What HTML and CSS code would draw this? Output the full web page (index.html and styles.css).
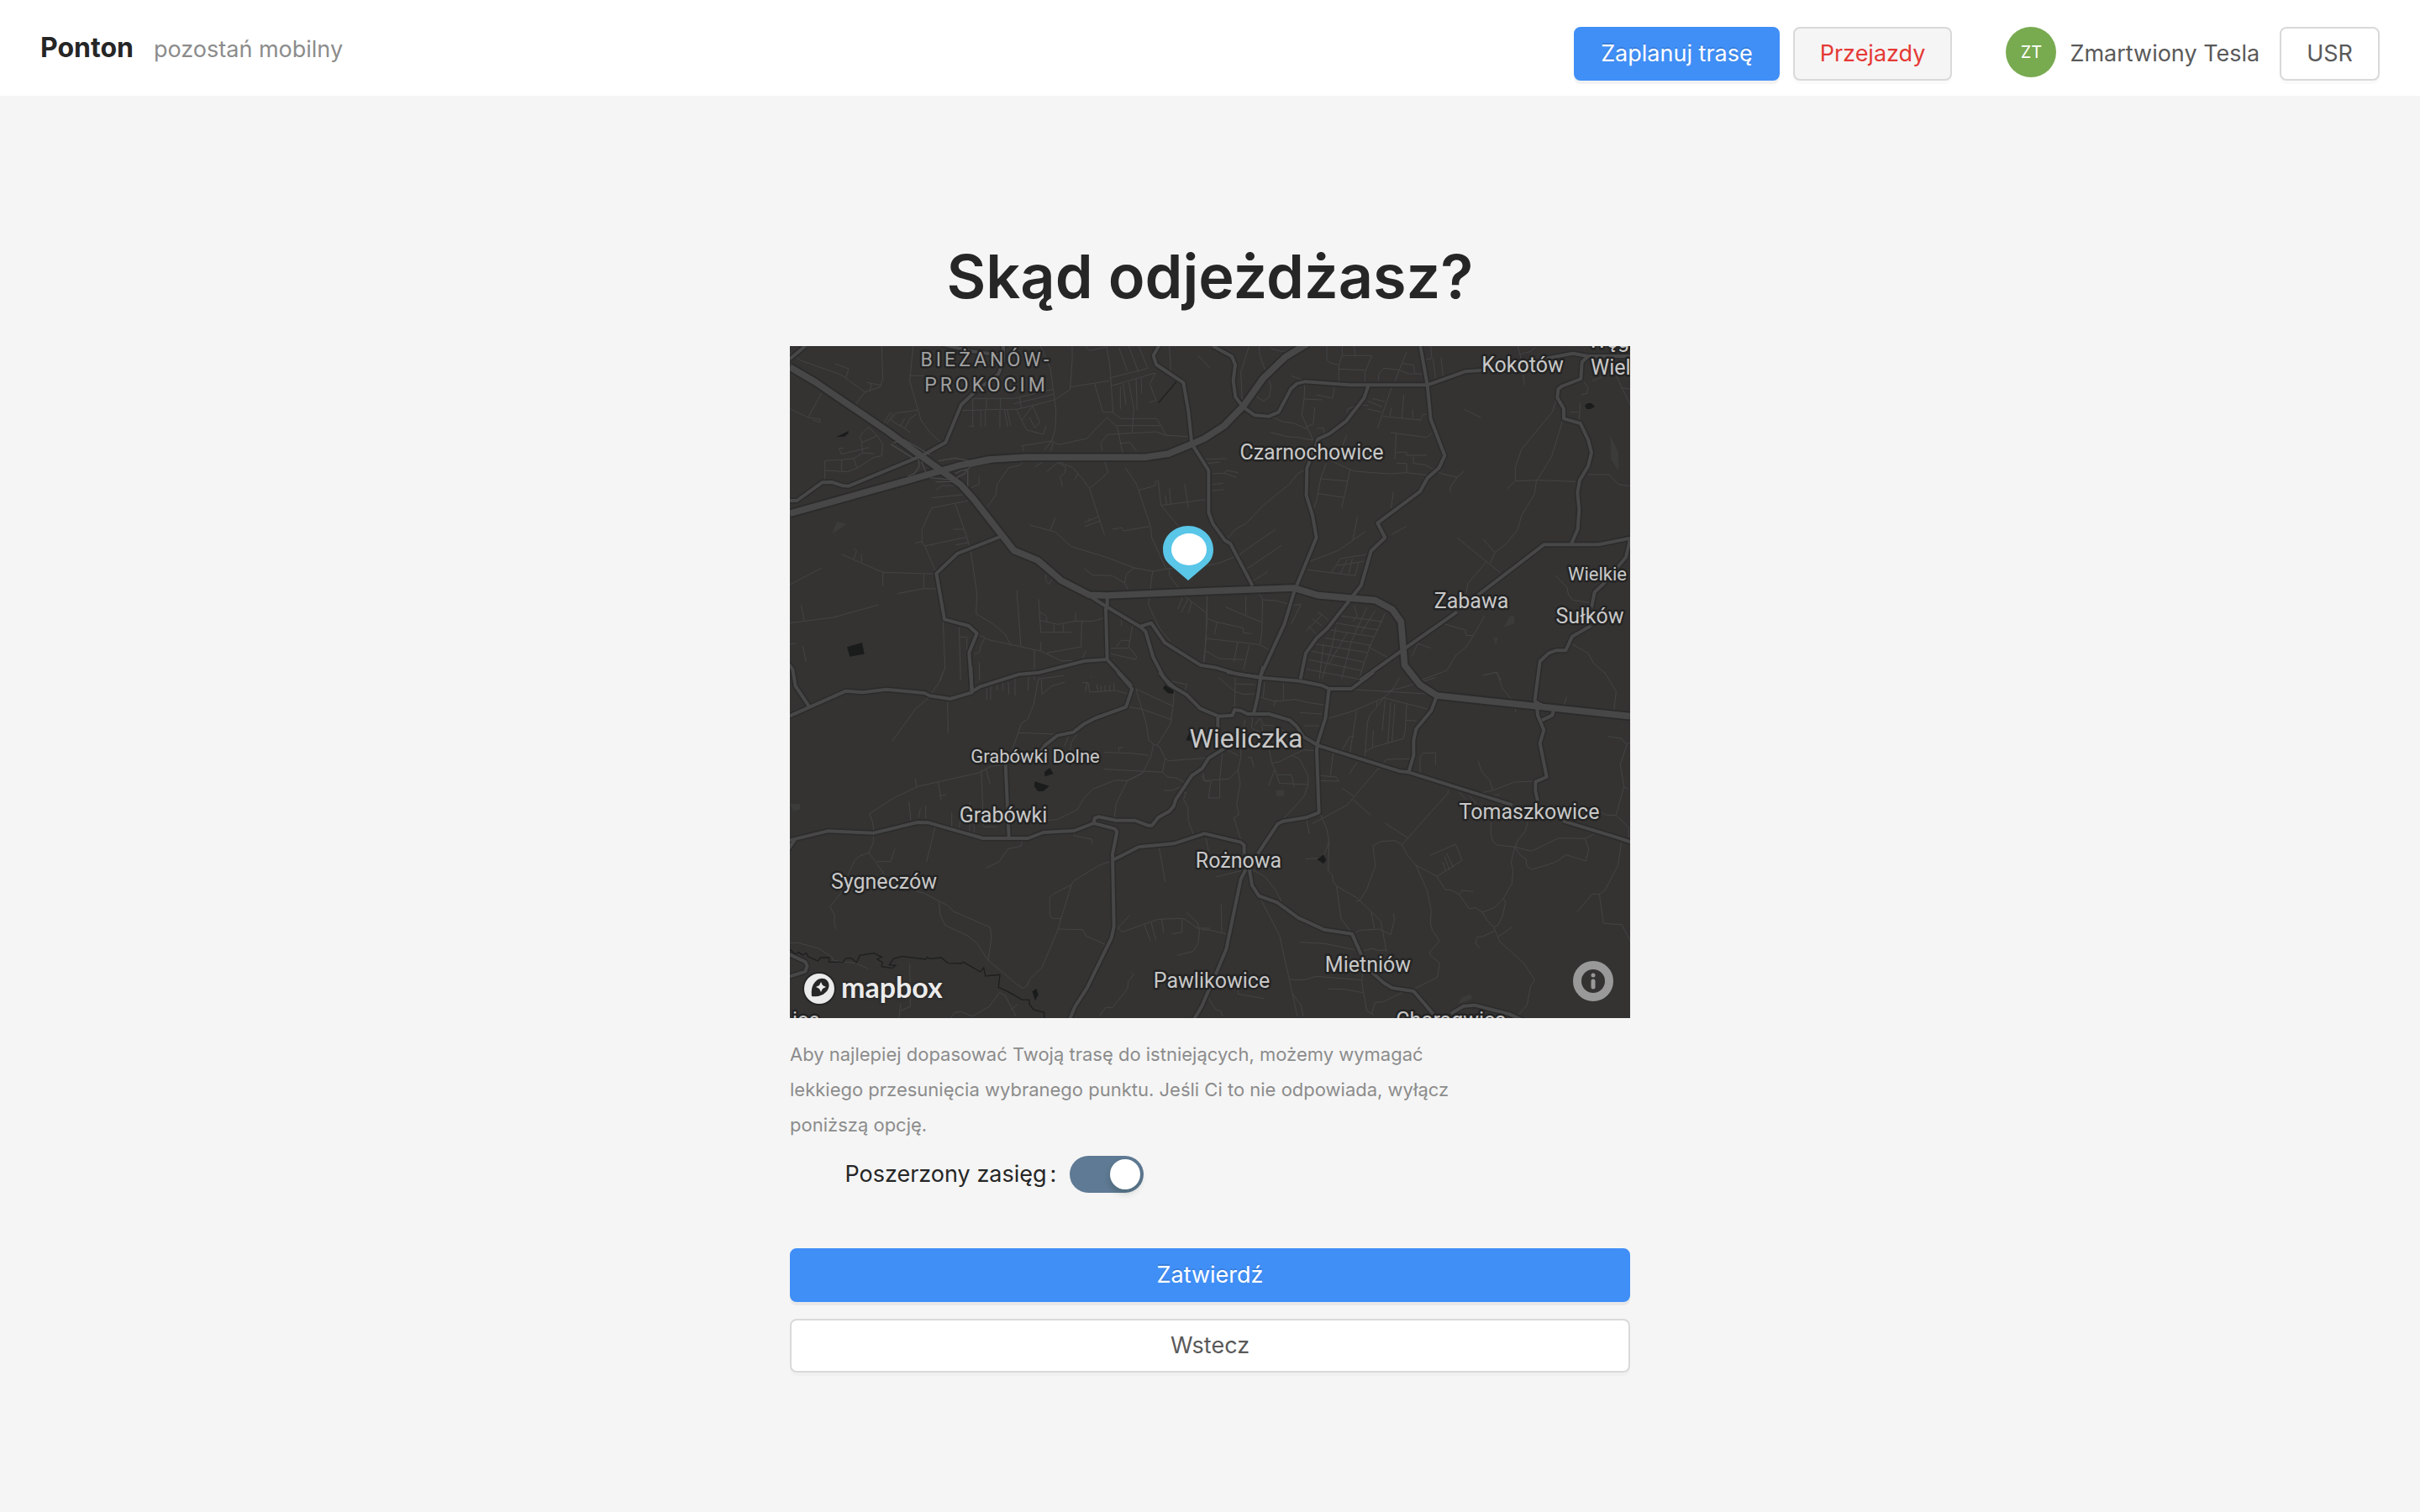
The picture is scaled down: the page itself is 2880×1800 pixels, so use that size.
FILE: index.html
```html
<!DOCTYPE html>
<html lang="pl">
<head>
  <meta charset="UTF-8" />
  <meta name="viewport" content="width=device-width, initial-scale=1.0"/>
  <title>Ponton</title>
  <link rel="stylesheet" href="styles.css">
</head>
<body>

  <header class="page-header">
    <div class="brand">
      <span class="brand-title">Ponton</span>
      <span class="brand-subtitle">pozostań mobilny</span>
    </div>
    <nav class="header-actions">
      <button type="button" class="btn btn-primary">Zaplanuj trasę</button>
      <button type="button" class="btn btn-danger">Przejazdy</button>
      <div class="user">
        <span class="avatar">ZT</span>
        <span class="user-name">Zmartwiony Tesla</span>
      </div>
      <button type="button" class="btn">USR</button>
    </nav>
  </header>

  <main class="content">
    <h1>Skąd odjeżdżasz?</h1>

    <div class="map">
      <svg class="map-canvas" viewBox="0 0 1000 800" role="img" aria-label="Mapa okolic Wieliczki">
        <svg width="1000" height="800" viewBox="0 0 3000 2400">
          <defs>
            <!-- Drogi lokalne -->
            <g id="roads">
              <g transform="translate(-30 -36)">
                <path d="M30 82L85 36M0 588H55L145 523L180 522L220 535L240 536L500 428L586 380L642 245L690 200L775 135L792 90V30"/>
                <path d="M575 30L680 55L780 68M1350 30L1328 70L1338 102L1435 167L1453 270L1465 385L1525 480V630L1540 670L1583 730L1603 742L1682 892"/>
                <path d="M785 715L628 777L553 848L582 1012L668 1035L698 1062L670 1130L680 1270L710 1252L850 1208L920 1202L1085 1160L1162 1155L1250 1250"/>
                <path d="M1095 925L1150 960L1280 1038L1320 1025L1368 1095L1495 1175L1550 1184L1630 1208L1705 1218M1163 930V960L1158 975L1163 1155M1280 1038L1300 1055L1327 1147L1365 1220L1402 1255"/>
                <path d="M0 1140L40 1190L50 1250L100 1325"/>
              </g>
              <g transform="translate(1470 -36)">
                <path d="M40 36L108 73L120 103L113 160L121 218L148 254L190 283L240 287L275 272L318 190L340 170L368 163L530 175H806L940 127L1005 122M595 178L580 222L515 305L455 350L415 368L405 400L376 472L374 570L396 640L410 720L340 890"/>
                <path d="M780 30L806 175L818 297L868 427L848 470L806 508L780 555L628 668L655 720L605 768L570 890L450 1043L410 1080L372 1133L353 1225"/>
                <path d="M333 905L295 1030L205 1225M565 1230L727 1115L912 985M980 930L1222 745H1418L1540 720"/>
                <path d="M1230 80L1325 62L1380 72H1540M1380 72L1358 93L1354 153L1285 180L1273 190L1270 220L1293 260V295L1352 312L1380 370L1392 417L1380 465L1350 515L1342 560L1348 620L1343 690L1320 742M1530 725L1515 790L1440 880L1403 915L1392 970M1390 1035L1323 1073L1300 1123H1265L1240 1132L1208 1162L1190 1300L1197 1320L1200 1355L1222 1407L1208 1455L1232 1575L1192 1592V1625L1200 1660"/>
              </g>
              <g transform="translate(-30 1164)">
                <path d="M0 170L230 68L290 73L375 62L510 75L530 85L602 96L680 73L676 -20M1200 0L1252 60L1230 125L1120 165L1078 187L1042 215L985 227L940 262L920 290M800 330L812 592"/>
                <path d="M1350 0L1385 45L1445 80L1495 130L1560 158L1610 155L1618 135L1640 138L1665 150H1740L1815 172L1840 195L1865 232L1915 262"/>
                <path d="M0 608L165 568L330 575L485 537L525 538L720 594H880L935 573L1045 567L1115 540L1190 560L1198 570L1182 650L1187 910L1178 950L1090 1130L1048 1195L1025 1250M1115 540L1118 522L1132 517L1195 530H1262L1308 548H1323L1345 520L1385 497L1400 480L1408 455L1465 370L1502 345L1525 308L1570 280L1620 250"/>
                <path d="M48 598L20 640M20 1005L85 1035L92 1050L85 1070L20 1090M1187 670L1275 625L1400 613L1510 577L1640 608L1652 618V650"/>
              </g>
              <g transform="translate(1470 1164)">
                <path d="M90 0L210 20L350 32L430 48L455 60H535L615 0M220 -20L212 10L200 90L186 148M58 160V210M455 60L442 165L415 250L411 280L419 502L373 520L290 533L272 542L200 650M415 262L710 355L740 358L1110 475M740 355L757 298V245L766 203L820 138L840 85M1290 532L1480 590L1540 610M1258 130L1252 155L1215 172M1190 105L1240 132"/>
                <path d="M158 705L140 740L88 990L50 1080L0 1195L-30 1245M170 700L180 762L205 800L270 823L345 878L437 920L537 935L570 1010M605 1070L650 1110L680 1128L757 1140L830 1225M890 1220L935 1193L975 1190L1100 1222L1160 1250"/>
              </g>
            </g>

            <!-- Drogi krajowe i autostrada -->
            <g id="highways">
              <path d="M0 75L90 128L350 305L475 397L610 495L655 545L800 730L885 765L970 838L1070 889L1130 891L1500 875L1800 864L1885 890L2090 908L2150 940L2182 985L2195 1140L2250 1210L2310 1248L2700 1290L3000 1322"/>
              <path d="M0 598L420 480L610 425L710 405L840 397H1270L1350 385L1435 350L1480 330L1550 285L1620 213L1690 115L1770 38L1850 -10"/>
            </g>
          </defs>

          <!-- Ulice -->
          <g class="streets">
            <g transform="translate(-30 -36)">
              <path d="M30 60L70 88L212 138L298 200L352 182L362 155L358 36M192 99L240 117L230 150M298 200L265 243M305 166L355 176M322 170L315 198M30 260L95 291L140 298L136 308L112 300M95 291L143 205M155 512V445L215 442L258 437L290 418L287 380L280 362L290 345L312 325L345 360L362 388L358 428L330 433L270 472L235 485L155 480M215 442V482M258 437L270 472M290 418L332 420M287 380L340 358M205 402L215 422L312 398M205 402L222 400"/>
              <path d="M470 36L458 160L498 300L530 345L570 380M458 142H515M366 310L390 272M376 314L400 275M390 300L410 275L485 265M390 300L425 322L440 295M425 322L440 330L462 292L482 280M440 330L460 345"/>
              <path d="M683 223H830L970 190M683 223V320M645 266L775 262H840L975 228M732 223V262M782 223V262M850 220L856 256M712 266V325M728 266V322M780 266V328M796 264L808 325M806 264L818 320M670 322H688M840 265L875 335L935 352L945 320M858 300L897 250L922 308L905 328L885 290M680 223L640 245M830 242L972 208"/>
              <path d="M1038 36V90L1030 192L975 228L980 262L978 330L965 375L990 388L1090 366L1163 290L1200 328L1218 420M925 36L960 115L975 228M1085 36L1100 52L1160 40M1160 36L1172 100L1184 273L1212 295H1340L1375 355L1465 360M1172 150L1308 115M1178 178L1335 132M1205 42L1235 125M1240 36L1275 130M1275 36L1308 115M1030 182L1172 160M1118 170L1148 272H1184M1210 180V260M1220 170L1230 245M1240 165L1258 260L1252 345M1266 150L1270 265M1285 150V205M1335 132L1315 172L1338 230L1312 238M1195 320H1355M1140 382L1145 410M1140 382L1163 352L1338 342L1375 355M1212 383L1245 380L1268 412M965 375L860 392L865 410M965 375L940 405M970 380L962 410M1385 36L1390 125"/>
              <path d="M1487 70L1530 115M990 450L1040 470L1075 510L1100 545L1153 710M1100 545L1166 488L1155 450M735 612L765 568L770 530L812 470L850 462L862 450M905 468L932 450M947 485L985 452L1015 468L1012 488L995 503L1004 538M1045 515L1060 490M1083 665L1132 645M1083 680L1138 660M1095 650L1105 660M1228 470L1268 530L1318 680L1322 720L1375 835M1278 550L1332 535L1338 515M1345 515L1355 605L1420 682M1355 605L1515 584M1370 568L1375 602M1385 545L1390 600M1440 528L1452 615M1180 690L1215 685L1222 696L1315 680M887 675L978 700L1035 752L1165 792L1260 828L1325 840L1400 828M978 648L960 692"/>
              <path d="M535 578L668 565M550 552L572 534H640M536 614L668 588M536 614L502 690V738L512 750L553 848M620 598L662 718L676 770L698 920L695 992L755 1028L798 1065L820 1105M512 750L662 718M613 690H650M622 746L668 738M478 740L502 734M665 538V470M678 542L706 528V502M215 780L362 844L553 850M258 758L268 768L258 796M286 778V808M362 844V893M508 850V900M415 920L508 902L553 903M30 888L145 828M30 1025L185 1005L347 960M70 960L82 1018M76 1108L88 1163M30 1100L52 1098"/>
              <path d="M1080 830L1110 853L1180 856L1225 882L1240 910M1260 828L1232 850L1225 882M1325 840L1310 960L1350 1045L1388 1090M1385 832V856L1418 900M945 850L943 872L956 887L966 868M840 908L855 1110M918 940L926 1058H1035M922 985L945 1000L948 1020M920 1015L988 1030L1050 1018L1110 1019L1148 1008M973 1030V1055M1006 1030V1055M1050 988V1018M1072 1020L1070 1110L948 1132M700 1065L740 1085L925 1125L1000 1160H1040M925 1092V1125M903 1120V1230M577 1020L584 1185L565 1230M634 1040L640 1230M634 1075H662V1130M725 1080L710 1110V1125L690 1138M706 1165L708 1230M1440 930L1519 990M1432 935L1415 975M1452 940L1427 988M1465 948L1453 990M1253 1035L1240 1110L1268 1145L1265 1155L1175 1135M1175 1115H1240M1195 1110L1213 1087H1245M1214 1015V1035M1088 1125L1075 1150M1519 920V1020L1510 1160"/>
            </g>
            <g transform="translate(1470 -36)">
              <path d="M168 40L140 130L145 235M205 36L208 70L248 180L242 218L222 232L200 220L192 200M248 45L290 56L310 50M320 142L368 160M447 36V85L460 97L490 103M502 36V70L490 103V162M502 70H608L583 130V165M545 36L548 70M490 118L583 122M732 57L718 90L690 162M630 160L634 135L650 115L700 120L740 135H788M715 98L757 104L760 132M818 36L822 80L802 84M826 80L835 150M855 75L862 145M1130 36L1138 70L1153 175M1138 65L1175 55L1190 42"/>
              <path d="M368 175L366 225L358 282L398 372M366 225L430 228M410 210L468 222L474 182M404 255L398 315L372 325M245 288L295 308L325 310L378 332M245 344L308 360L345 362L398 372M412 330L436 328V350M520 275V262L560 245L595 248M610 223L655 235M592 232L645 253M592 260L642 272M678 185L628 330M648 287L782 300L790 280H803M672 285L678 256M722 210L715 292M754 290V262M675 345L803 362L822 347M695 348L690 440M692 415H732V426H805M756 430V455L798 460L858 492L912 505L938 482M697 455H732V488M912 505L888 540V558M460 445L545 483L670 492L730 488L805 497M445 455L425 510L410 590L400 615M425 510L522 518M530 478L500 615M415 563L505 576M365 480L342 492L315 528L220 605L158 670L120 690L95 722"/>
              <path d="M15 440L90 438M20 455L65 450M38 492L80 490L90 480L130 488M80 490L125 505M38 530L78 526M38 553L78 548M135 780L264 690M160 833L285 748M182 875L236 842M20 820L65 810L140 780M380 835L548 856L560 810M387 805L490 765L585 698M556 645L540 728M465 842L496 795L590 780M482 820L578 805M520 798L495 850M538 795L525 850M685 558L676 615M678 710L730 680M500 400L518 355M1265 230L1253 270L1142 405L1120 470V518L1092 545M1120 518L1205 515L1335 520M1288 305L1250 430L1195 520L1188 565L1143 640L1128 692L1085 745L1047 773L1030 812M1005 725L1047 773M912 720L1068 847M1018 805L950 885L945 920M938 262L998 292M1380 495H1455L1488 530L1530 536M1352 240L1348 298M1315 272H1345M1365 165L1380 185L1375 205L1355 210M1480 140L1500 185L1530 245M1500 185L1530 190M1395 160L1460 135"/>
              <path d="M20 925L15 1095L5 1180M158 930V995M85 968L213 1022M205 920L218 940L215 1060L208 1102L242 1122M218 942L265 945L328 962L355 958L320 1028M20 1010L55 1022L148 1042L150 1060L178 1063M55 1022L46 1065M15 1080L208 1102M128 1095L115 1165M170 1105L150 1190M15 1125L62 1152L152 1156M412 985L430 995L372 1055M430 995L452 1015M395 1010L430 1035M380 1035L410 1065M655 990L600 1110L560 1230M545 965L555 1000L540 1020M500 1000L645 1020M480 1025L630 1050M460 1050L618 1075M440 1078L608 1105M405 1100L590 1130M390 1125L580 1165M380 1155L570 1195M375 1190L560 1225M590 970L535 1090L500 1225M620 980L570 1060M480 1040L465 1110L430 1225M520 1060L455 1170M435 1100L420 1225M595 1110L668 1150M750 1145L772 1098L818 1115M865 1028L942 1050L945 1070H970L1010 1000M970 1070L945 1110L908 1140L875 1195L780 1230M1262 855L1305 898L1310 925L1325 943L1390 953M1323 1100L1380 1133L1400 1170L1440 1203L1480 1270L1472 1338M1005 1212L1052 1202L1070 1230"/>
            </g>
            <g transform="translate(-30 1164)">
              <path d="M578 0L565 35L522 95L480 130L395 248M593 100L595 218M733 55V100M747 50V100M770 45V65M790 38V68M810 35L812 80M834 25V85M883 10L880 65M918 20L900 118L878 170L857 182L820 290M915 25L1008 13M928 28L930 80L965 50L1012 36M845 217L975 222M1055 222L1036 250L1030 280M1025 230L1010 265M1092 36L1085 70M1075 38H1095L1100 72L1195 66L1250 82M1125 45L1130 68M1140 48L1142 68M1155 48V68M1172 45V68M1187 40V68M1105 15V20M1240 125L1285 132L1392 170M1265 60L1398 122M1265 60L1302 182L1312 245L1328 257L1350 268L1370 308L1382 317L1520 307M1402 70L1398 122L1390 182L1342 262M1328 257L1320 300L1290 360L1235 388L1195 470L1188 525M1150 287L1250 290L1312 298M1204 285V270H1220M1150 347L1360 358L1370 308M1360 358L1380 375L1408 378L1440 395M1290 360L1238 388L1190 387L1112 418L1082 448L1055 492L985 527L945 530"/>
              <path d="M800 330L745 338L705 360L490 408L410 445L315 505L325 535L330 570M478 380L482 410M560 393L570 458M565 442L588 438M713 350L722 550M455 462L462 530M496 487L490 520M515 478V522M608 502V555M640 520L635 555M672 465V570M688 490V575M722 553H770M745 400L730 345M548 555L518 678M328 585V610L312 645L280 657L262 672L235 730M312 645L345 690L370 728M340 677H390L405 632M220 780L173 838L190 870L188 895L195 917M860 600L855 622L808 632L778 677L730 700M1042 570L1045 585L1108 597V615M480 782L515 793L595 835L615 855L745 912L750 945L738 1030M562 820L568 870L585 905L665 942L697 968L738 1030L840 1115L862 1130L876 1122L888 1095L930 1055L985 925L1035 760L1045 745L1135 690L1180 675M1035 760L970 793L958 805V868L965 880H998M988 918L1075 920L1088 943L1155 973"/>
              <path d="M30 967H60L135 988L180 1018L185 1030L265 1040L310 1060M458 1040L460 1195L425 1210M425 1185L420 1240M605 1235L618 1217L640 1212L680 1230L742 1195L778 1145L798 1155L838 1230M820 1205L842 1188M1200 915L1218 928L1345 883L1430 880L1440 883L1485 915H1530M1200 915L1242 870M1430 880V930L1395 935M1357 882L1365 932M1295 900L1317 960M1320 895L1337 958M1445 857L1485 895L1493 920L1487 970L1470 998L1412 1012M1348 625L1370 748M1505 360L1510 390H1530M1365 423H1395L1430 408M1435 430L1445 430L1435 455L1452 485V530L1470 578M1250 1075L1258 1080L1238 1105L1236 1130L1182 1198H1157L1135 1230M1515 590L1525 640M1385 30L1448 45L1440 65"/>
            </g>
            <g transform="translate(1470 1164)">
              <path d="M60 20L120 70L150 80L190 78M120 20L118 130M120 42L190 45M225 35L220 90M292 40V100M210 90L260 105L335 98L375 108L440 118M265 100L256 122M350 145L430 150M365 192H420M535 62L835 80M455 165L545 138L650 92L805 132M708 18L680 65L650 92M835 20L720 55L650 72M650 92L630 120M627 105L625 125L600 155L592 180L583 300M655 100L645 210M675 108L665 255M690 112L680 250M732 115L727 210L720 238L615 268L583 285M727 172L768 175M553 140L530 288M613 208L610 268M545 230H530L495 290M630 350L660 312L745 310M557 320L528 363M470 290L460 368M182 160L178 200L250 235M155 170L150 200M190 190L208 165L222 190L255 192L315 220M215 190L220 225L235 232M240 270L250 325L262 350L278 397L380 402M250 325L275 322L322 298L365 278L415 282M322 298L350 310L380 370V405L365 445L295 522M140 270V305L130 350L138 400L125 470L133 510L115 520L140 600M130 350L98 382L10 388L0 370M75 280L65 385V450H25L30 410L35 390M78 270L132 300M165 305H178L187 340M240 405L260 350M270 367H320L332 410M423 370L480 375L490 390L425 388M395 542L520 475L545 445L630 345M545 445L502 415M540 455L604 512M655 540L740 595M715 617L880 432V420M780 365V305L790 290L835 288V332"/>
              <path d="M425 510L447 560L455 605L452 708L467 725L470 750L482 765L498 880L530 925M455 600L445 635L430 660M370 668L415 665M375 530L385 577M482 765L552 805L605 855L640 890L660 1000M552 820L565 815L588 780L620 695L612 620L640 605L690 602L715 617L738 658L765 690L840 730L870 778H890L920 795L955 845L978 842L1002 858L1022 890L1042 910L1065 963L1150 1040L1190 1100L1175 1120L1162 1190L1130 1225M765 690L805 780L820 850L817 900L825 925L850 960L815 1000L817 1012L850 1040L842 1090L762 1130M920 795L930 780L970 784M840 730L930 673L907 615L815 655M860 677L872 712M875 647L898 698M868 660L885 708M1002 858L1045 842L1078 808L1085 825L1075 870L1058 905L1042 910M1045 925L1003 945H985L978 968L992 985M1110 910L1060 945M1078 808L1108 755L1112 710L1105 680L1118 625L1130 600L1155 570L1165 535M1118 625L1055 618L1040 605L1032 578L1034 535M1118 625L1178 640L1275 593L1370 595L1400 580M1118 625L1138 655L1158 668L1162 695L1180 705L1262 680L1302 653L1372 675L1382 635L1370 595M1498 610L1487 690L1440 780L1420 793H1395L1340 857M1420 793L1435 898L1500 902L1520 940L1530 960"/>
              <path d="M988 318L1000 355L1030 390L1040 422L1000 432M1040 422L1118 393L1185 390M920 430L945 455M1045 440L1065 438M955 440L980 470M1450 230L1500 238L1518 260L1495 330L1508 410L1480 510M1518 260L1530 250M1508 410L1525 420M1420 495L1440 510L1480 512L1525 555V590M1003 12L1055 0L1072 55L1100 90L1120 105M1303 88L1293 125M1120 130V145M50 732L140 710M70 830L72 930M0 920L30 922L88 936M180 705L225 730L265 780L285 820M205 800L278 940L342 1230M350 965L440 970L545 992M315 1098L365 1100L410 1087L570 1100M450 1132L510 1133L575 1145M580 1020L572 1110L590 1210L615 1225M580 995L612 987L630 995L660 993M550 930L565 922L635 918L675 938L688 885L685 862M605 855L617 915M718 1145L695 1155L650 1178L620 1180L607 1220M130 1130V1150L223 1166M25 1165L50 1205L70 1212L75 1230M325 1150L355 1190L363 1230"/>
            </g>
          </g>

          <!-- Woda i rzeka -->
          <path class="river" d="M0 2155L20 2172L32 2165L45 2175L58 2168L65 2180L100 2196L110 2184H140V2200H190L200 2186H220L238 2202L250 2176L300 2168L328 2182L312 2190L330 2200L328 2216L365 2222L378 2212L355 2210L370 2188L400 2180L485 2190L490 2182L500 2188L540 2184L565 2204L610 2205L620 2200L680 2235L692 2220L698 2250L750 2245L745 2290L780 2306L830 2335L855 2335V2350L870 2370L908 2380V2400"/>
          <path class="river" d="M1380 127L1316 203"/>
          <path class="water" d="M165 325L205 305L210 303L208 313L195 323ZM204 1075L258 1059L266 1100L214 1109ZM2838 213L2848 204H2862L2874 216L2858 225H2845ZM1332 1222L1340 1210L1370 1230V1242L1350 1240ZM1414 1408L1430 1372L1435 1410ZM909 1521L928 1506L941 1528L910 1537ZM874 1555L926 1571L905 1590L885 1590L873 1572ZM1883 1834L1905 1816L1915 1835L1905 1849ZM865 2305L880 2295L887 2316L876 2338Z"/>
          <path class="land" d="M150 672L168 626L202 636ZM2550 1004L2570 964H2586V990ZM2511 1040H2528L2520 1070ZM2930 320L2958 380V444L2932 405ZM1737 1587H1764V1608H1737ZM2385 2350L2400 2325L2430 2315L2437 2330L2400 2345ZM0 1635H36V1655L12 1662Z"/>

          <use href="#roads" class="casing"/>
          <use href="#highways" class="casing casing-wide"/>
          <use href="#roads" class="road"/>
          <use href="#highways" class="road road-wide"/>
          <path class="ramp" d="M370 345L410 335L500 388M360 350L440 400M460 405L462 430L445 455L420 465M470 412L485 450M500 470L580 478L625 455L630 440L610 445L590 455M520 485L600 484M530 410L590 400L640 410M635 500V440L645 430L730 412"/>
        </svg>

        <g class="labels">
          <text class="district" x="234" y="24">BIEŻANÓW-</text>
          <text class="district" x="234" y="54">PROKOCIM</text>
          <text x="621" y="135">Czarnochowice</text>
          <text x="872" y="31">Kokotów</text>
          <text class="start" x="950" y="2">Węgrzce</text>
          <text class="start" x="953" y="34">Wielkie</text>
          <text class="small" x="961" y="279">Wielkie</text>
          <text x="952" y="330">Sułków</text>
          <text x="811" y="312">Zabawa</text>
          <text class="town" x="543" y="478">Wieliczka</text>
          <text class="small" x="292" y="496">Grabówki Dolne</text>
          <text x="254" y="567">Grabówki</text>
          <text x="112" y="646">Sygneczów</text>
          <text x="534" y="621">Rożnowa</text>
          <text x="880" y="563">Tomaszkowice</text>
          <text x="688" y="745">Mietniów</text>
          <text x="502" y="764">Pawlikowice</text>
          <text x="787" y="811">Chorągwica</text>
          <text class="start" x="3" y="811">ice</text>
        </g>
      </svg>

      <svg class="pin" viewBox="0 0 60 65" aria-hidden="true">
        <path fill="#5ac6e8" d="M30 0C46 0 60 12 60 28C60 36 57 42 51 47L30 65L9 47C3 42 0 36 0 28C0 12 14 0 30 0Z"/>
        <ellipse cx="31" cy="28" rx="21" ry="19" fill="#fff"/>
      </svg>

      <a class="map-logo" href="#">
        <svg viewBox="0 0 40 40" aria-hidden="true">
          <circle cx="20" cy="20" r="20" fill="#262626"/>
          <circle cx="20" cy="20" r="18" fill="#ebebeb"/>
          <path fill="#262626" d="M11 29C10 20 12 15 16 11C20 7 26 7 29 10C33 14 32 20 28 24C24 28 19 30 11 29Z"/>
          <path fill="#ebebeb" d="M22 12L24 16L28 18L24 20L22 24L20 20L16 18L20 16Z"/>
        </svg>
        <span>mapbox</span>
      </a>

      <button type="button" class="map-info" aria-label="Informacje o mapie">
        <svg viewBox="0 0 48 48" aria-hidden="true">
          <circle cx="24" cy="24" r="19" fill="none" stroke="#999" stroke-width="10"/>
          <circle cx="24" cy="17" r="2.5" fill="#999"/>
          <path d="M24 24V31" stroke="#999" stroke-width="5" stroke-linecap="round"/>
        </svg>
      </button>
    </div>

    <form class="options">
      <p class="hint">Aby najlepiej dopasować Twoją trasę do istniejących, możemy wymagać lekkiego przesunięcia wybranego punktu. Jeśli Ci to nie odpowiada, wyłącz poniższą opcję.</p>
      <div class="field">
        <label for="range">Poszerzony zasięg</label>
        <input type="checkbox" id="range" class="switch" role="switch" checked>
      </div>
      <button type="button" class="btn btn-primary btn-block">Zatwierdź</button>
      <button type="button" class="btn btn-block">Wstecz</button>
    </form>
  </main>

</body>
</html>
```

FILE: styles.css
```css
* {
  box-sizing: border-box;
}

body {
  margin: 0;
  min-height: 100vh;
  background: #f5f5f5;
  color: #262626;
  font-family: Inter, "Liberation Sans", sans-serif;
  font-size: 27px;
  line-height: 42px;
}

/* Nagłówek */
.page-header {
  display: flex;
  justify-content: space-between;
  padding: 32px 48px 18px;
  background: #fff;
}

.brand {
  display: flex;
  align-items: baseline;
  gap: 24px;
  padding-top: 4px;
}
.brand-title {
  font-size: 32px;
  font-weight: 700;
}
.brand-subtitle {
  color: #8c8c8c;
}

.header-actions {
  display: flex;
  gap: 16px;
}

.user {
  display: flex;
  gap: 16px;
  margin-left: 48px;
  margin-right: 8px;
  color: #595959;
  line-height: 64px;
}

.avatar {
  width: 60px;
  height: 60px;
  border-radius: 50%;
  background: #78aa50;
  color: #fff;
  font-size: 20px;
  line-height: 60px;
  text-align: center;
}

/* Przyciski */
.btn {
  height: 64px;
  padding: 0 30px;
  border: 2px solid #d9d9d9;
  border-radius: 8px;
  background: #fff;
  box-shadow: 0 4px 0 rgba(0,0,0,0.02);
  color: #595959;
  font: inherit;
  cursor: pointer;
}
.btn-primary {
  border-color: #408ff7;
  background: #408ff7;
  box-shadow: 0 4px 0 rgba(0,0,0,0.05);
  color: #fff;
  text-shadow: 0 -2px 0 rgba(0,0,0,0.12);
}
.btn-danger {
  background: #f5f5f5;
  color: #e53935;
}
.btn-block {
  display: block;
  width: 100%;
}
.btn-block + .btn-block {
  margin-top: 20px;
}

/* Treść */
.content {
  width: 100%;
  max-width: 1000px;
  margin: 0 auto;
  padding: 168px 0 96px;
}

h1 {
  margin: 0 0 36px;
  font-size: 72px;
  font-weight: 600;
  line-height: 94px;
  text-align: center;
}

/* Mapa */
.map {
  position: relative;
  overflow: hidden;
  background: #343332;
}
.map-canvas {
  display: block;
  width: 100%;
}

.streets {
  fill: none;
  stroke: #444;
  stroke-width: 3;
}
.river {
  fill: none;
  stroke: #1d1f1e;
  stroke-width: 4;
}
.water {
  fill: #1a1c1b;
}
.land {
  fill: #3b3b3a;
}
.casing,
.road {
  fill: none;
  stroke-linejoin: round;
}
.casing {
  stroke: #2b2b2b;
  stroke-width: 21;
}
.casing-wide {
  stroke-width: 34;
}
.road {
  stroke: #474747;
  stroke-width: 12;
}
.road-wide {
  stroke-width: 23;
}
.ramp {
  fill: none;
  stroke: #484848;
  stroke-width: 4;
}

.labels {
  fill: #c8c8c8;
  stroke: #242424;
  stroke-width: 5;
  stroke-linejoin: round;
  paint-order: stroke;
  font-family: Roboto, sans-serif;
  font-size: 25px;
  text-anchor: middle;
}
.labels .small {
  font-size: 22px;
}
.labels .town {
  font-size: 32px;
}
.labels .start {
  text-anchor: start;
}
.labels .district {
  fill: #a0a0a0;
  font-size: 23px;
  letter-spacing: 4px;
}

.pin {
  position: absolute;
  left: 444px;
  top: 214px;
  width: 60px;
}

.map-logo {
  position: absolute;
  left: 15px;
  bottom: 15px;
  display: flex;
  align-items: center;
  gap: 6px;
  color: #ebebeb;
  font-family: Lato, sans-serif;
  font-size: 34px;
  font-weight: 700;
  line-height: 36px;
  text-decoration: none;
  text-shadow: 0 0 3px #222, 0 0 3px #222;
}
.map-logo svg {
  width: 40px;
}
.map-logo span {
  padding-bottom: 4px;
}

.map-info {
  position: absolute;
  right: 20px;
  bottom: 20px;
  width: 48px;
  height: 48px;
  padding: 0;
  border: none;
  background: none;
  cursor: pointer;
}
.map-info svg {
  display: block;
}

/* Opcje */
.hint {
  max-width: 833px;
  margin: 22px 0 16px;
  color: #8c8c8c;
  font-size: 22px;
}

.field {
  display: flex;
  align-items: center;
  margin-bottom: 66px;
}
.field label {
  width: 33.333%;
  padding-right: 16px;
  text-align: right;
}
.field label::after {
  content: ":";
  margin-left: 4px;
}

.switch {
  appearance: none;
  display: flex;
  justify-content: flex-end;
  width: 88px;
  height: 44px;
  margin: 0;
  padding: 4px;
  border-radius: 22px;
  background: #5f7a94;
  cursor: pointer;
}
.switch::before {
  content: "";
  width: 36px;
  height: 36px;
  border-radius: 50%;
  background: #fff;
  box-shadow: 0 4px 8px rgba(0,35,11,0.2);
}
.switch:not(:checked) {
  justify-content: flex-start;
  background: #bfbfbf;
}
```
